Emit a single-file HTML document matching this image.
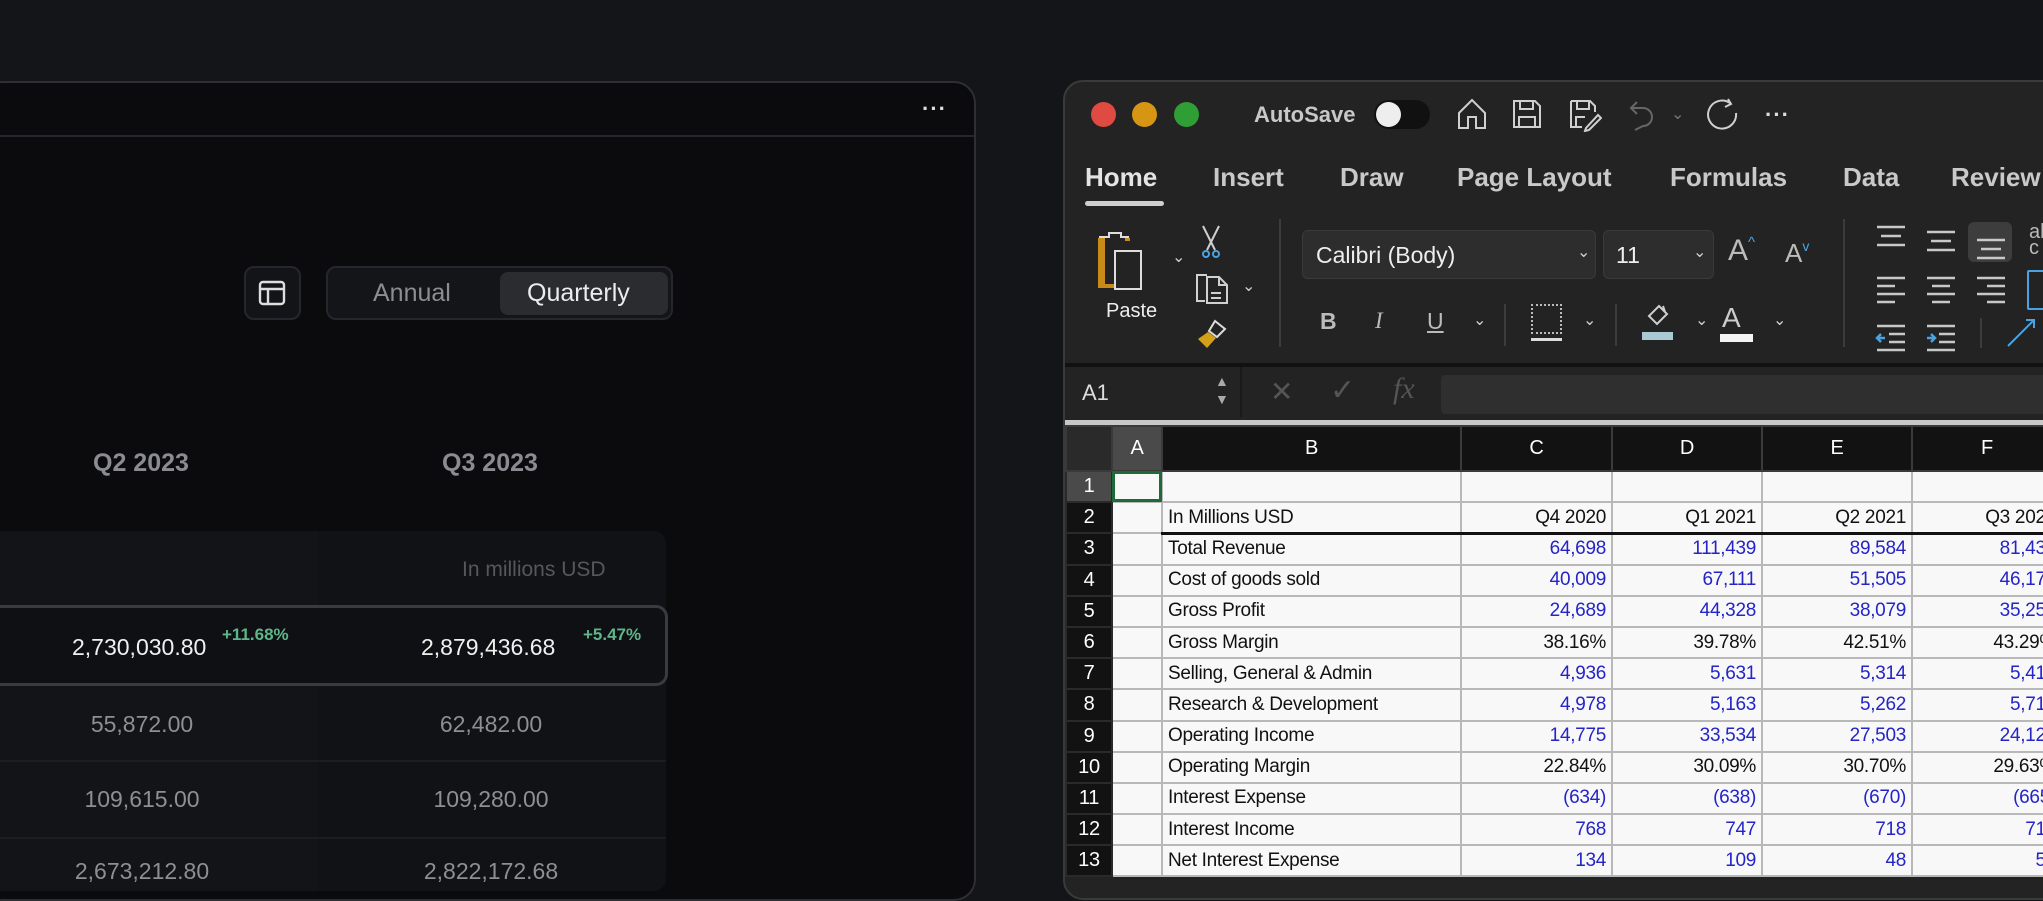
<!DOCTYPE html>
<html><head><meta charset="utf-8"><style>
*{margin:0;padding:0;box-sizing:border-box}
body{width:2043px;height:876px;overflow:hidden;background:#141519;font-family:"Liberation Sans",sans-serif;position:relative}
.a{position:absolute}
.lp{left:-20px;top:81px;width:996px;height:820px;background:#0b0b0e;border:2px solid #2e2f33;border-radius:22px}
.num{position:absolute;font-size:23px;color:#8d8f95;text-align:center;width:284px}
.xl{left:1063px;top:80px;width:1010px;height:820px;background:#232323;border:2px solid #3a3a3a;border-radius:20px;overflow:hidden}
.tab{position:absolute;top:80px;font-size:26px;font-weight:bold;color:#c9c9c9}
.ic{position:absolute;stroke:#d0d0d0;fill:none;stroke-width:2}
.chev{position:absolute;font-size:16px;color:#d0d0d0}
table{position:absolute;left:0px;top:343px;border-collapse:collapse;table-layout:fixed;font-family:"Liberation Sans",sans-serif}
td{height:31.2px;border:2px solid #b8b8b8;background:#f8f8f8;font-size:19px;color:#111;padding:0 5px;white-space:nowrap;overflow:hidden;text-align:right;letter-spacing:-0.3px}
td.l{text-align:left}
td.rh{background:#121212;color:#fff;text-align:center;border-color:#2a2a2a;font-size:20px}
tr.h td{height:45px;background:#121212;color:#fff;text-align:center;border-color:#3a3a3a;font-size:20px}
td.b{color:#2424c8}
</style></head><body>
<div class="a lp"></div>
<div class="a" style="left:-20px;top:135px;width:994px;height:2px;background:#26272b"></div>
<div class="a" style="left:922px;top:96px;color:#ddd;font-size:22px;font-weight:bold;letter-spacing:1px">···</div>
<div class="a" style="left:244px;top:266px;width:57px;height:54px;border:2px solid #26272c;border-radius:10px;background:#131418"></div>
<svg class="a" style="left:258px;top:279px" width="28" height="28" viewBox="0 0 28 28"><rect x="2" y="3" width="24" height="22" rx="3" stroke="#ddd" stroke-width="2.4" fill="none"/><line x1="2" y1="10" x2="26" y2="10" stroke="#ddd" stroke-width="2.4"/><line x1="10" y1="10" x2="10" y2="25" stroke="#ddd" stroke-width="2.4"/></svg>
<div class="a" style="left:326px;top:266px;width:347px;height:54px;border:2px solid #26272c;border-radius:10px;background:#141519"></div>
<div class="a" style="left:500px;top:272px;width:168px;height:43px;border-radius:8px;background:#2b2c30"></div>
<div class="a" style="left:373px;top:279px;font-size:25px;color:#8b8d92">Annual</div>
<div class="a" style="left:527px;top:279px;font-size:25px;color:#ececec">Quarterly</div>
<div class="a" style="left:93px;top:449px;font-size:25px;font-weight:bold;color:#8a8c91">Q2 2023</div>
<div class="a" style="left:442px;top:449px;font-size:25px;font-weight:bold;color:#8a8c91">Q3 2023</div>
<div class="a" style="left:-20px;top:531px;width:686px;height:360px;background:#111216;border-radius:12px"></div>
<div class="a" style="left:-20px;top:531px;width:338px;height:360px;background:#131418"></div>
<div class="a" style="left:462px;top:558px;font-size:21px;color:#55575c">In millions USD</div>
<div class="a" style="left:-20px;top:605px;width:688px;height:81px;border:3px solid #3a3b40;border-radius:12px;background:#0f1013"></div>
<div class="a" style="left:72px;top:634px;font-size:23px;color:#f0f0f0">2,730,030.80</div>
<div class="a" style="left:222px;top:625px;font-size:17px;font-weight:bold;color:#5fb58a">+11.68%</div>
<div class="a" style="left:421px;top:634px;font-size:23px;color:#f0f0f0">2,879,436.68</div>
<div class="a" style="left:583px;top:625px;font-size:17px;font-weight:bold;color:#5fb58a">+5.47%</div>
<div class="num" style="left:0;top:711px">55,872.00</div>
<div class="num" style="left:349px;top:711px">62,482.00</div>
<div class="a" style="left:-20px;top:760px;width:686px;height:2px;background:#1c1d21"></div>
<div class="num" style="left:0;top:786px">109,615.00</div>
<div class="num" style="left:349px;top:786px">109,280.00</div>
<div class="a" style="left:-20px;top:837px;width:686px;height:2px;background:#1c1d21"></div>
<div class="num" style="left:0;top:858px">2,673,212.80</div>
<div class="num" style="left:349px;top:858px">2,822,172.68</div>

<div class="a xl">
<div class="a" style="left:26px;top:20px;width:25px;height:25px;border-radius:50%;background:#df4b42"></div>
<div class="a" style="left:67px;top:20px;width:25px;height:25px;border-radius:50%;background:#d69613"></div>
<div class="a" style="left:109px;top:20px;width:25px;height:25px;border-radius:50%;background:#2f9e35"></div>
<div class="a" style="left:189px;top:20px;font-size:22px;font-weight:bold;color:#c8c8c8">AutoSave</div>
<div class="a" style="left:309px;top:18px;width:56px;height:29px;border-radius:15px;background:#111"></div>
<div class="a" style="left:311px;top:20px;width:25px;height:25px;border-radius:50%;background:#eee"></div>
<svg class="ic" style="left:390px;top:15px" width="34" height="34" viewBox="0 0 34 34"><path d="M4 16 L17 3 L30 16 V31 H21 V20 H13 V31 H4 Z"/></svg>
<svg class="ic" style="left:446px;top:16px" width="32" height="32" viewBox="0 0 32 32"><path d="M3 3 H24 L29 8 V29 H3 Z M9 3 V11 H22 V3 M8 29 V19 H24 V29"/></svg>
<svg class="ic" style="left:503px;top:16px" width="34" height="34" viewBox="0 0 34 34"><path d="M3 3 H22 L27 8 V14 M14 29 H3 V3 M9 3 V11 H21 V3 M8 29 V19 H17 M18 30 L30 17 L33 20 L21 32 L17 33 Z"/></svg>
<svg class="ic" style="left:562px;top:16px;stroke:#666" width="30" height="34" viewBox="0 0 30 34"><path d="M10 4 L4 10 L10 16 M4 10 H16 A9 9 0 0 1 16 28 L8 32"/></svg>
<div class="chev" style="left:606px;top:22px;color:#777">⌄</div>
<svg class="ic" style="left:641px;top:15px" width="34" height="36" viewBox="0 0 34 36"><path d="M24 6 A14 14 0 1 0 30 16 M22 2 L25 7 L19 10"/></svg>
<div class="a" style="left:700px;top:20px;font-size:22px;font-weight:bold;color:#ddd;letter-spacing:1px">···</div>

<div class="tab" style="left:20px;color:#e4e4e4">Home</div>
<div class="a" style="left:20px;top:119px;width:79px;height:5px;border-radius:3px;background:#cfcfcf"></div>
<div class="tab" style="left:148px">Insert</div>
<div class="tab" style="left:275px">Draw</div>
<div class="tab" style="left:392px">Page Layout</div>
<div class="tab" style="left:605px">Formulas</div>
<div class="tab" style="left:778px">Data</div>
<div class="tab" style="left:886px">Review</div>

<svg class="a" style="left:30px;top:145px" width="62" height="66" viewBox="0 0 62 66"><path d="M4 10 H14 V6 H26 V10 H34" stroke="#ddd" fill="none" stroke-width="2"/><path d="M3 11 H10 V59 H3 Z" fill="#c88b1a"/><path d="M3 57 H20 V61 H3 Z" fill="#c88b1a"/><path d="M30 11 H35 V14 H30Z" fill="#c88b1a"/><rect x="20" y="24" width="26" height="38" stroke="#ddd" stroke-width="2" fill="none"/></svg>
<div class="chev" style="left:107px;top:165px">⌄</div>
<div class="a" style="left:41px;top:218px;font-size:20px;color:#eee">Paste</div>
<svg class="ic" style="left:134px;top:142px" width="24" height="36" viewBox="0 0 24 36"><path d="M4 2 L16 26 M20 2 L8 26"/><circle cx="7" cy="30" r="3" stroke="#4aa3e0"/><circle cx="17" cy="30" r="3" stroke="#4aa3e0"/></svg>
<svg class="ic" style="left:130px;top:187px" width="36" height="36" viewBox="0 0 36 36"><path d="M12 6 H2 V32 H10 M12 8 H24 L32 16 V34 H12 Z M24 8 V16 H32 M16 24 H26 M16 29 H26"/></svg>
<div class="chev" style="left:177px;top:194px">⌄</div>
<svg class="a" style="left:130px;top:235px" width="34" height="34" viewBox="0 0 34 34"><path d="M20 4 L30 12 L22 20 L14 14 Z" stroke="#ddd" fill="none" stroke-width="2"/><path d="M13 15 L21 21 L12 31 L3 22 Z" fill="#d4a017"/></svg>
<div class="a" style="left:214px;top:137px;width:2px;height:128px;background:#3c3c3c"></div>
<div class="a" style="left:237px;top:148px;width:294px;height:49px;background:#2d2d2d;border:1px solid #3a3a3a;border-radius:6px"></div>
<div class="a" style="left:251px;top:160px;font-size:23px;color:#eee">Calibri (Body)</div>
<div class="chev" style="left:512px;top:160px">⌄</div>
<div class="a" style="left:538px;top:148px;width:111px;height:49px;background:#2d2d2d;border:1px solid #3a3a3a;border-radius:6px"></div>
<div class="a" style="left:551px;top:160px;font-size:23px;color:#eee">11</div>
<div class="chev" style="left:628px;top:160px">⌄</div>
<div class="a" style="left:663px;top:152px;font-size:30px;color:#bbb">A<span style="font-size:15px;vertical-align:top;color:#4aa3e0">^</span></div>
<div class="a" style="left:720px;top:156px;font-size:26px;color:#bbb">A<span style="font-size:14px;vertical-align:top;color:#4aa3e0">v</span></div>
<div class="a" style="left:255px;top:226px;font-size:23px;font-weight:bold;color:#bbb">B</div>
<div class="a" style="left:310px;top:226px;font-size:23px;font-style:italic;font-family:'Liberation Serif',serif;color:#bbb">I</div>
<div class="a" style="left:362px;top:226px;font-size:23px;text-decoration:underline;color:#bbb">U</div>
<div class="chev" style="left:408px;top:228px">⌄</div>
<div class="a" style="left:439px;top:222px;width:2px;height:42px;background:#3c3c3c"></div>
<div class="a" style="left:466px;top:222px;width:31px;height:30px;border:2px dotted #bbb"></div>
<div class="a" style="left:466px;top:256px;width:31px;height:3px;background:#ddd"></div>
<div class="chev" style="left:518px;top:228px">⌄</div>
<div class="a" style="left:550px;top:222px;width:2px;height:42px;background:#3c3c3c"></div>
<svg class="ic" style="left:578px;top:220px" width="30" height="28" viewBox="0 0 30 28"><path d="M6 14 L16 4 L24 12 L14 22 Z M20 4 L22 10"/></svg>
<div class="a" style="left:577px;top:250px;width:31px;height:8px;background:#a9c9d4"></div>
<div class="chev" style="left:630px;top:228px">⌄</div>
<div class="a" style="left:657px;top:220px;font-size:28px;color:#ccc">A</div>
<div class="a" style="left:655px;top:252px;width:33px;height:8px;background:#f4f4f4"></div>
<div class="chev" style="left:708px;top:228px">⌄</div>
<div class="a" style="left:778px;top:137px;width:2px;height:128px;background:#3c3c3c"></div>
<div class="a" style="left:903px;top:140px;width:44px;height:40px;background:#3d3d3d;border-radius:6px"></div>
<svg class="a" style="left:808px;top:140px" width="150" height="130" viewBox="0 0 150 130" stroke="#c8c8c8" stroke-width="2.5" fill="none">
<path d="M4 5 H32 M8 14 H28 M4 23 H32"/>
<path d="M54 10 H82 M58 19 H78 M54 28 H82"/>
<path d="M104 18 H132 M108 27 H128 M104 36 H132"/>
<path d="M4 56 H32 M4 64 H22 M4 72 H32 M4 80 H22"/>
<path d="M54 56 H82 M59 64 H77 M54 72 H82 M59 80 H77"/>
<path d="M104 56 H132 M114 64 H132 M104 72 H132 M114 80 H132"/>
<path d="M4 104 H32 M16 112 H32 M16 120 H32 M4 128 H32"/>
<path d="M54 104 H82 M66 112 H82 M66 120 H82 M54 128 H82"/>
<path d="M4 116 H12 M8 112 L4 116 L8 120" stroke="#4aa3e0"/>
<path d="M54 116 H62 M58 112 L62 116 L58 120" stroke="#4aa3e0"/>
</svg>
<div class="a" style="left:962px;top:188px;width:50px;height:40px;border:2px solid #4aa3e0;border-radius:2px"></div>
<div class="a" style="left:915px;top:236px;width:2px;height:30px;background:#3c3c3c"></div>
<div class="a" style="left:964px;top:142px;color:#bbb;font-size:20px;line-height:16px">ab<br>c</div>
<svg class="ic" style="left:937px;top:232px;stroke:#4aa3e0" width="36" height="36" viewBox="0 0 36 36"><path d="M6 32 L32 6 M24 6 H32 V14"/></svg>

<div class="a" style="left:0;top:281px;width:1010px;height:4px;background:#111"></div>
<div class="a" style="left:17px;top:298px;font-size:22px;color:#ddd">A1</div>
<div class="a" style="left:150px;top:290px;font-size:14px;color:#aaa;line-height:18px">▲<br>▼</div>
<div class="a" style="left:175px;top:285px;width:2px;height:50px;background:#1a1a1a"></div>
<div class="a" style="left:205px;top:293px;font-size:28px;color:#555">✕</div>
<div class="a" style="left:265px;top:291px;font-size:30px;color:#555">✓</div>
<div class="a" style="left:328px;top:290px;font-size:30px;font-style:italic;font-family:'Liberation Serif',serif;color:#555">fx</div>
<div class="a" style="left:376px;top:293px;width:640px;height:39px;background:#2f2f2f;border-radius:4px"></div>
<div class="a" style="left:0;top:338px;width:1010px;height:6px;background:#c8c8c8"></div>

<table>
<colgroup><col style="width:46px"><col style="width:50px"><col style="width:299px"><col style="width:151px"><col style="width:150px"><col style="width:150px"><col style="width:150px"></colgroup>
<tr class="h"><td style="background:#2a2a2a"></td><td style="background:#4a4a4a">A</td><td>B</td><td>C</td><td>D</td><td>E</td><td>F</td></tr>
<tr><td class="rh" style="background:#4a4a4a">1</td><td style="outline:3px solid #1e6b3a;outline-offset:-3px"></td><td></td><td></td><td></td><td></td><td></td></tr>
<tr><td class="rh">2</td><td></td><td class="l" style="border-bottom:3px solid #111">In Millions USD</td><td style="border-bottom:3px solid #111">Q4 2020</td><td style="border-bottom:3px solid #111">Q1 2021</td><td style="border-bottom:3px solid #111">Q2 2021</td><td style="border-bottom:3px solid #111">Q3 2021</td></tr>
<tr><td class="rh">3</td><td></td><td class="l">Total Revenue</td><td class="b">64,698</td><td class="b">111,439</td><td class="b">89,584</td><td class="b">81,434</td></tr>
<tr><td class="rh">4</td><td></td><td class="l">Cost of goods sold</td><td class="b">40,009</td><td class="b">67,111</td><td class="b">51,505</td><td class="b">46,179</td></tr>
<tr><td class="rh">5</td><td></td><td class="l">Gross Profit</td><td class="b">24,689</td><td class="b">44,328</td><td class="b">38,079</td><td class="b">35,255</td></tr>
<tr><td class="rh">6</td><td></td><td class="l">Gross Margin</td><td>38.16%</td><td>39.78%</td><td>42.51%</td><td>43.29%</td></tr>
<tr><td class="rh">7</td><td></td><td class="l">Selling, General &amp; Admin</td><td class="b">4,936</td><td class="b">5,631</td><td class="b">5,314</td><td class="b">5,412</td></tr>
<tr><td class="rh">8</td><td></td><td class="l">Research &amp; Development</td><td class="b">4,978</td><td class="b">5,163</td><td class="b">5,262</td><td class="b">5,717</td></tr>
<tr><td class="rh">9</td><td></td><td class="l">Operating Income</td><td class="b">14,775</td><td class="b">33,534</td><td class="b">27,503</td><td class="b">24,120</td></tr>
<tr><td class="rh">10</td><td></td><td class="l">Operating Margin</td><td>22.84%</td><td>30.09%</td><td>30.70%</td><td>29.63%</td></tr>
<tr><td class="rh">11</td><td></td><td class="l">Interest Expense</td><td class="b">(634)</td><td class="b">(638)</td><td class="b">(670)</td><td class="b">(665)</td></tr>
<tr><td class="rh">12</td><td></td><td class="l">Interest Income</td><td class="b">768</td><td class="b">747</td><td class="b">718</td><td class="b">719</td></tr>
<tr><td class="rh">13</td><td></td><td class="l">Net Interest Expense</td><td class="b">134</td><td class="b">109</td><td class="b">48</td><td class="b">54</td></tr>
</table>
</div>
</body></html>
